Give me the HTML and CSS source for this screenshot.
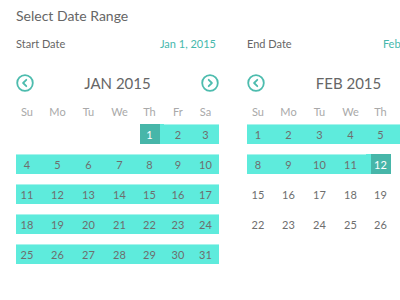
FILE: index.html
```html
<!DOCTYPE html>
<html lang="en">
<head>
    <meta charset="UTF-8">
    <meta name="viewport" content="width=device-width, initial-scale=1.0">
    <title>Select Date Range</title>
    <link rel="stylesheet" href="styles.css">
</head>
<body>
    <div class="picker">
        <h1 class="picker-title">Select Date Range</h1>

        <div class="months">
            <!-- January -->
            <div class="month">
                <div class="range-field">
                    <span class="field-label">Start Date</span>
                    <span class="field-value">Jan 1, 2015</span>
                </div>
                <div class="month-head">
                    <svg class="nav" width="18" height="18" viewBox="0 0 18 18"><circle cx="9" cy="9" r="7.8"/><path d="M10.3 5.8 7.1 9l3.2 3.2"/></svg>
                    <span class="month-name">JAN 2015</span>
                    <svg class="nav" width="18" height="18" viewBox="0 0 18 18"><circle cx="9" cy="9" r="7.8"/><path d="M7.7 5.8 10.9 9l-3.2 3.2"/></svg>
                </div>
                <div class="weekdays">
                    <span>Su</span><span>Mo</span><span>Tu</span><span>We</span><span>Th</span><span>Fr</span><span>Sa</span>
                </div>
                <div class="week">
                    <span class="day"></span><span class="day"></span><span class="day"></span><span class="day"></span>
                    <span class="day start"><b>1</b></span>
                    <span class="day in-range"><b>2</b></span>
                    <span class="day in-range"><b>3</b></span>
                </div>
                <div class="week">
                    <span class="day in-range"><b>4</b></span><span class="day in-range"><b>5</b></span><span class="day in-range"><b>6</b></span><span class="day in-range"><b>7</b></span><span class="day in-range"><b>8</b></span><span class="day in-range"><b>9</b></span><span class="day in-range"><b>10</b></span>
                </div>
                <div class="week">
                    <span class="day in-range"><b>11</b></span><span class="day in-range"><b>12</b></span><span class="day in-range"><b>13</b></span><span class="day in-range"><b>14</b></span><span class="day in-range"><b>15</b></span><span class="day in-range"><b>16</b></span><span class="day in-range"><b>17</b></span>
                </div>
                <div class="week">
                    <span class="day in-range"><b>18</b></span><span class="day in-range"><b>19</b></span><span class="day in-range"><b>20</b></span><span class="day in-range"><b>21</b></span><span class="day in-range"><b>22</b></span><span class="day in-range"><b>23</b></span><span class="day in-range"><b>24</b></span>
                </div>
                <div class="week">
                    <span class="day in-range"><b>25</b></span><span class="day in-range"><b>26</b></span><span class="day in-range"><b>27</b></span><span class="day in-range"><b>28</b></span><span class="day in-range"><b>29</b></span><span class="day in-range"><b>30</b></span><span class="day in-range"><b>31</b></span>
                </div>
            </div>

            <!-- February -->
            <div class="month">
                <div class="range-field">
                    <span class="field-label">End Date</span>
                    <span class="field-value">Feb 12, 2015</span>
                </div>
                <div class="month-head">
                    <svg class="nav" width="18" height="18" viewBox="0 0 18 18"><circle cx="9" cy="9" r="7.8"/><path d="M10.3 5.8 7.1 9l3.2 3.2"/></svg>
                    <span class="month-name">FEB 2015</span>
                    <svg class="nav" width="18" height="18" viewBox="0 0 18 18"><circle cx="9" cy="9" r="7.8"/><path d="M7.7 5.8 10.9 9l-3.2 3.2"/></svg>
                </div>
                <div class="weekdays">
                    <span>Su</span><span>Mo</span><span>Tu</span><span>We</span><span>Th</span><span>Fr</span><span>Sa</span>
                </div>
                <div class="week">
                    <span class="day in-range"><b>1</b></span><span class="day in-range"><b>2</b></span><span class="day in-range"><b>3</b></span><span class="day in-range"><b>4</b></span><span class="day in-range"><b>5</b></span><span class="day in-range"><b>6</b></span><span class="day in-range"><b>7</b></span>
                </div>
                <div class="week">
                    <span class="day in-range"><b>8</b></span><span class="day in-range"><b>9</b></span><span class="day in-range"><b>10</b></span><span class="day in-range"><b>11</b></span>
                    <span class="day end"><b>12</b></span>
                    <span class="day"><b>13</b></span><span class="day"><b>14</b></span>
                </div>
                <div class="week">
                    <span class="day"><b>15</b></span><span class="day"><b>16</b></span><span class="day"><b>17</b></span><span class="day"><b>18</b></span><span class="day"><b>19</b></span><span class="day"><b>20</b></span><span class="day"><b>21</b></span>
                </div>
                <div class="week">
                    <span class="day"><b>22</b></span><span class="day"><b>23</b></span><span class="day"><b>24</b></span><span class="day"><b>25</b></span><span class="day"><b>26</b></span><span class="day"><b>27</b></span><span class="day"><b>28</b></span>
                </div>
            </div>
        </div>
    </div>
</body>
</html>
```

FILE: styles.css
```css
* {
    margin: 0;
    padding: 0;
    box-sizing: border-box;
}

body {
    font-family: 'Lato', 'Open Sans', sans-serif;
    color: #666;
    background: #fff;
    overflow: hidden;
}

.picker {
    padding: 6px 0 0 16px;
    width: 720px;
}

.picker-title {
    font-size: 14px;
    font-weight: 400;
    line-height: 20px;
    color: #666;
}

.months {
    display: flex;
    gap: 28px;
    margin-top: 10px;
}

.month {
    width: 203px;
    flex-shrink: 0;
}

.range-field {
    display: flex;
    justify-content: space-between;
    padding-right: 3px;
    font-size: 11px;
    line-height: 16px;
}

.field-label {
    color: #666;
}

.field-value {
    color: #45b8ac;
}

.month-head {
    display: flex;
    align-items: center;
    justify-content: space-between;
    margin-top: 22px;
    height: 18px;
}

.nav {
    fill: none;
    stroke: #4dbcae;
    stroke-width: 1.8;
    stroke-linecap: round;
    stroke-linejoin: round;
}

.month-name {
    font-size: 15px;
    color: #666;
}

.weekdays,
.week {
    display: grid;
    grid-template-columns: 26px 31px 31px 31px 29px 28px 27px;
    text-align: center;
}

.weekdays {
    margin-top: 13px;
    font-size: 11px;
    line-height: 14px;
    color: #a9a9a9;
}

.weekdays span:first-child,
.week .day:first-child {
    padding-right: 4px;
}

.week {
    margin-top: 10px;
    font-size: 11px;
}

.weekdays + .week {
    margin-top: 5px;
}

.day {
    height: 20px;
    display: flex;
    align-items: center;
    justify-content: center;
    color: #6e6e6e;
}

.day b {
    font-weight: 400;
}

.in-range {
    background: #5eebdc;
    box-shadow: inset 0 1px #a6f4ec;
}

.start,
.end {
    box-shadow: none;
}

.start {
    background: linear-gradient(to right, transparent 50%, #5eebdc 50%);
}

.end {
    background: linear-gradient(to right, #5eebdc 50%, transparent 50%);
}

.start b,
.end b {
    display: flex;
    align-items: center;
    justify-content: center;
    width: 20px;
    height: 20px;
    background: #47b6a9;
    color: #fff;
}
```
